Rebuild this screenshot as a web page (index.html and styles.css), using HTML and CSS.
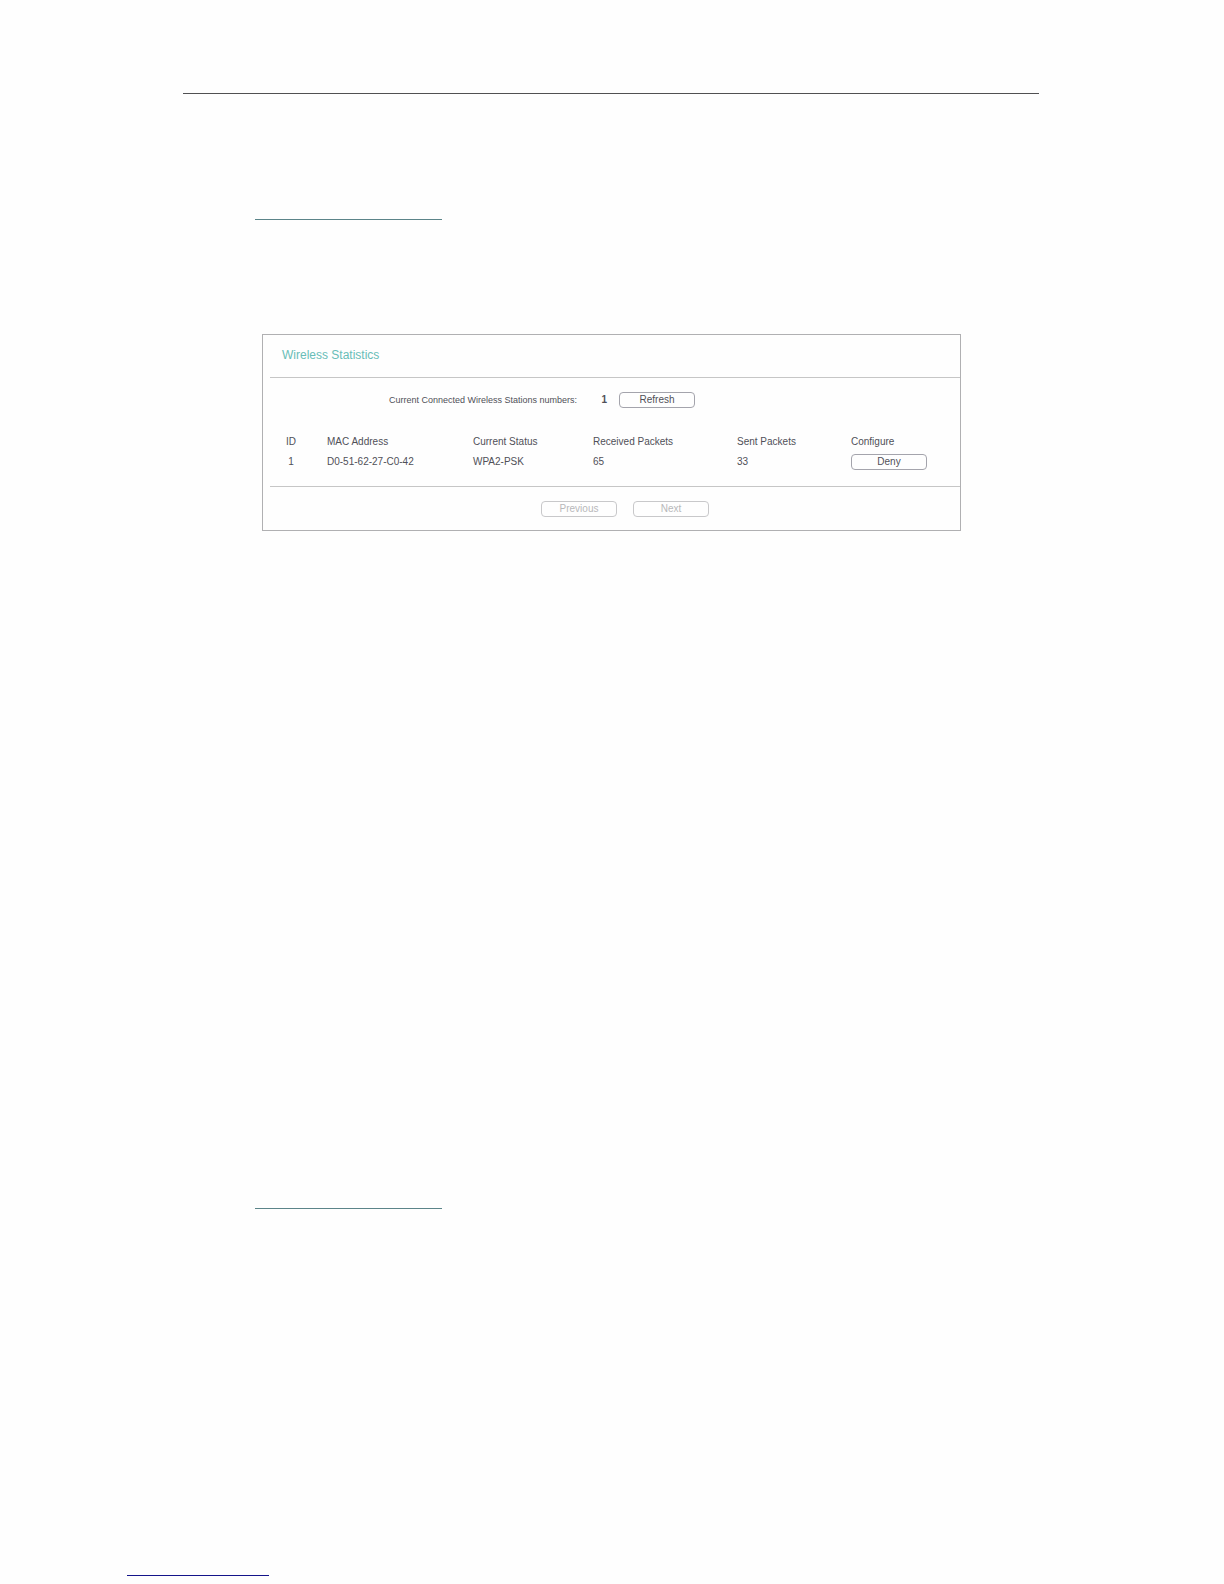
FILE: index.html
```html
<!DOCTYPE html>
<html lang="en">
  <head>
    <meta charset="UTF-8" />
    <meta name="viewport" content="width=device-width, initial-scale=1.0" />
    <title>Wireless Statistics</title>
    <link rel="stylesheet" href="styles.css">
  </head>
  <body>
    <main class="page">
      <hr class="line" />
      <hr class="line link-line first" />

      <section class="panel">
        <h1>Wireless Statistics</h1>
        <div class="stations">
          <span class="label">Current Connected Wireless Stations numbers:</span>
          <strong class="count">1</strong>
          <button type="button">Refresh</button>
        </div>
        <table>
          <thead>
            <tr>
              <th class="col-id">ID</th>
              <th class="col-mac">MAC Address</th>
              <th class="col-status">Current Status</th>
              <th class="col-received">Received Packets</th>
              <th class="col-sent">Sent Packets</th>
              <th>Configure</th>
            </tr>
          </thead>
          <tbody>
            <tr>
              <td class="col-id">1</td>
              <td>D0-51-62-27-C0-42</td>
              <td>WPA2-PSK</td>
              <td>65</td>
              <td>33</td>
              <td><button type="button">Deny</button></td>
            </tr>
          </tbody>
        </table>
        <div class="pager">
          <button type="button" disabled>Previous</button>
          <button type="button" disabled>Next</button>
        </div>
      </section>

      <hr class="line link-line second" />
    </main>
    <footer>
      <hr class="line footer-line" />
    </footer>
  </body>
</html>
```
FILE: styles.css
```css
* {
  box-sizing: border-box;
}

body {
  display: flex;
  flex-direction: column;
  min-height: 100vh;
  margin: 0;
  background: #fefefe;
  color: #505058;
  font-family: "Liberation Sans", Arial, sans-serif;
  font-size: 10px;
  line-height: 20px;
}

.page {
  margin: 93px 185px 0 183px;
}

/* Rules */
.line {
  height: 1px;
  margin: 0;
  border: none;
  background: #505052;
}

.link-line {
  width: 187px;
  margin-left: 72px;
  background: #5b8489;
}

.first {
  margin-top: 125px;
}

.second {
  margin-top: 677px;
}

/* Statistics panel */
.panel {
  margin: 114px 78px 0 79px;
  padding-left: 7px;
  border: 1px solid #b0b0b2;
}

h1 {
  margin: 0;
  padding: 10px 12px 12px;
  border-bottom: 1px solid #c6c6c6;
  color: #68bdb7;
  font-size: 12px;
  font-weight: normal;
}

.stations {
  display: flex;
  align-items: center;
  height: 16px;
  margin: 14px 0 24px;
}

.label {
  width: 307px;
  font-size: 9px;
  text-align: right;
}

.count {
  width: 42px;
  padding-right: 12px;
  text-align: right;
}

button {
  display: block;
  width: 76px;
  height: 16px;
  padding: 0;
  border: 1px solid #a4a4ac;
  border-radius: 4px;
  background: #fefefe;
  color: #505058;
  font-family: inherit;
  font-size: 10px;
  line-height: 14px;
}

button:disabled {
  border-color: #c8c8ca;
  color: #b8b8ba;
}

/* Connected stations */
table {
  width: 100%;
  border-collapse: collapse;
  table-layout: fixed;
}

th,
td {
  height: 20px;
  padding: 0 0 0 15px;
  font-weight: normal;
  text-align: left;
}

.col-id {
  width: 42px;
  padding: 0;
  text-align: center;
}

.col-mac {
  width: 146px;
}

.col-status {
  width: 120px;
}

.col-received {
  width: 144px;
}

.col-sent {
  width: 114px;
}

/* Paging buttons */
.pager {
  display: flex;
  justify-content: center;
  gap: 16px;
  margin-top: 14px;
  padding: 14px 0 13px 20px;
  border-top: 1px solid #c6c6c6;
}

footer {
  margin-top: auto;
  padding: 0 0 8px 127px;
}

.footer-line {
  width: 142px;
  background: #14148a;
}
```
